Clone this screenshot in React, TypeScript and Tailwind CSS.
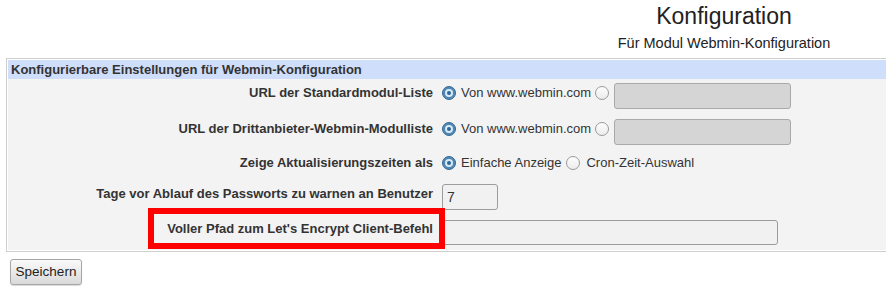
import React from "react";

function Radio({ checked }: { checked?: boolean }) {
  if (checked) {
    return (
      <span className="w-[14px] h-[14px] rounded-full bg-[#4f88b5] border border-[#3a6a91] flex items-center justify-center shrink-0">
        <span className="w-[8px] h-[8px] rounded-full bg-[#2c6797] border-2 border-[#d8e8f4]" />
      </span>
    );
  }
  return (
    <span className="block w-[14px] h-[14px] rounded-full bg-gradient-to-b from-[#fdfdfd] to-[#ececec] border border-[#9a9a9a] shrink-0" />
  );
}

function Label({ text, pt }: { text: string; pt: string }) {
  return (
    <div className={`w-[428px] shrink-0 text-right pr-[3px] font-bold leading-4 ${pt}`}>
      {text}
    </div>
  );
}

export default function App() {
  return (
    <div className="w-[886px] h-[299px] overflow-hidden bg-white text-[13px] text-[#333] font-['Liberation_Sans',Arial,sans-serif]">
      {/* Title */}
      <div className="flex h-[58px]">
        <div className="flex-1" />
        <div className="w-[324px] flex flex-col items-center">
          <div className="text-[23px] leading-[26px] mt-[3px] text-[#222]">Konfiguration</div>
          <div className="text-[14.5px] leading-[18px] mt-[5px] text-[#222]">Für Modul Webmin-Konfiguration</div>
        </div>
      </div>

      {/* Panel */}
      <div className="ml-[6px] w-[884px] border border-[#cfcfcf] bg-white p-[1px]">
        <div className="h-[19px] bg-[#cfdefa] pl-[3px] font-bold leading-[19px]">
          Konfigurierbare Einstellungen für Webmin-Konfiguration
        </div>
        <div className="bg-[#f3f3f3]">
          {/* Row 1 */}
          <div className="flex items-start h-[37px]">
            <Label text="URL der Standardmodul-Liste" pt="pt-[6px]" />
            <div className="flex items-start">
              <div className="flex items-center mt-[6px] h-4 ml-[6px]">
                <Radio checked />
                <span className="ml-[5px]">Von www.webmin.com</span>
                <span className="ml-[4px]"><Radio /></span>
              </div>
              <div className="ml-[5px] mt-[4px] w-[177px] h-[26px] rounded-[3px] border border-[#a9a9a9] bg-[#d5d5d5]" />
            </div>
          </div>

          {/* Row 2 */}
          <div className="flex items-start h-[34px]">
            <Label text="URL der Drittanbieter-Webmin-Modulliste" pt="pt-[5px]" />
            <div className="flex items-start">
              <div className="flex items-center mt-[5px] h-4 ml-[6px]">
                <Radio checked />
                <span className="ml-[5px]">Von www.webmin.com</span>
                <span className="ml-[4px]"><Radio /></span>
              </div>
              <div className="ml-[5px] mt-[3px] w-[177px] h-[26px] rounded-[3px] border border-[#a9a9a9] bg-[#d5d5d5]" />
            </div>
          </div>

          {/* Row 3 */}
          <div className="flex items-start h-[30px]">
            <Label text="Zeige Aktualisierungszeiten als" pt="pt-[5px]" />
            <div className="flex items-center mt-[5px] h-4 ml-[6px]">
              <Radio checked />
              <span className="ml-[5px]">Einfache Anzeige</span>
              <span className="ml-[5px]"><Radio /></span>
              <span className="ml-[6px]">Cron-Zeit-Auswahl</span>
            </div>
          </div>

          {/* Row 4 */}
          <div className="flex items-start h-[34px]">
            <Label text="Tage vor Ablauf des Passworts zu warnen an Benutzer" pt="pt-[6px]" />
            <div className="ml-[6px] mt-[4px] w-[56px] h-[26px] rounded-[3px] border border-[#9c9c9c] bg-[#f1f1f1] pl-[4px] leading-[24px] text-[14px]">
              7
            </div>
          </div>

          {/* Row 5 */}
          <div className="relative flex items-start h-[36px]">
            <Label text="Voller Pfad zum Let's Encrypt Client-Befehl" pt="pt-[7px]" />
            <div className="ml-[4px] mt-[6px] w-[338px] h-[25px] rounded-[3px] border border-[#9c9c9c] bg-[#f1f1f1]" />
            <div className="absolute left-[140px] top-[-6px] w-[297px] h-[41px] border-[6px] border-[#ff0000]" />
          </div>
        </div>
      </div>

      {/* Save button */}
      <button className="ml-[10px] mt-[7px] w-[72px] h-[26px] rounded-[3px] border border-[#a6a6a6] bg-gradient-to-b from-[#fafafa] to-[#dadada] shadow-[0_1px_1px_rgba(0,0,0,0.15)] text-[13.5px] text-[#222]">
        Speichern
      </button>
    </div>
  );
}
